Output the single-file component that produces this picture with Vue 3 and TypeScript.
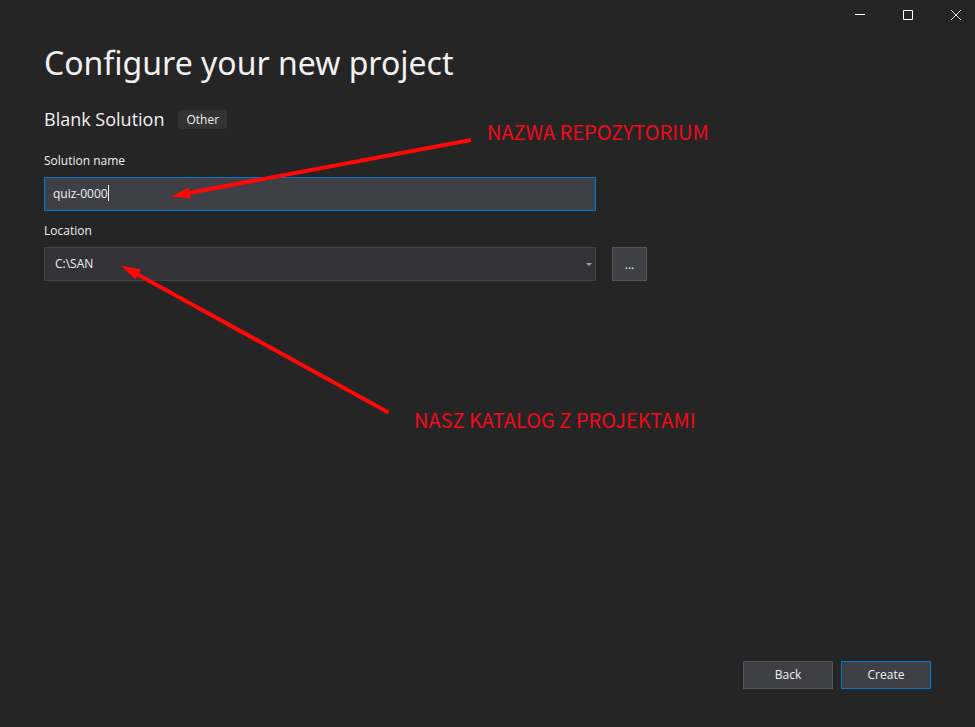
<script setup lang="ts">
import { ref } from 'vue'

const solutionName = ref<string>('quiz-0000')
const location = ref<string>('C:\\SAN')
const locations: string[] = ['C:\\SAN']
</script>

<template>
  <div class="window">
    <header class="titlebar">
      <button type="button" class="win-btn" aria-label="Minimize">
        <svg width="12" height="12" viewBox="0 0 12 12"><path d="M1 5.500H11" stroke="#fff" /></svg>
      </button>
      <button type="button" class="win-btn" aria-label="Maximize">
        <svg width="12" height="12" viewBox="0 0 12 12"><path d="M1.500 1.500H10.500V10.500H1.500Z" fill="none" stroke="#fff" /></svg>
      </button>
      <button type="button" class="win-btn" aria-label="Close">
        <svg width="12" height="12" viewBox="0 0 12 12"><path d="M1 1L11 11M11 1L1 11" stroke="#e0e0e0" /></svg>
      </button>
    </header>

    <main class="content">
      <h1>Configure your new project</h1>
      <div class="template">
        <h2>Blank Solution</h2>
        <span class="tag">Other</span>
      </div>

      <label for="solution-name">Solution name</label>
      <div class="row">
        <div class="field">
          <input id="solution-name" v-model="solutionName" type="text" spellcheck="false" />
          <span class="caret-line" aria-hidden="true"><span class="measure">{{ solutionName }}</span></span>
        </div>
      </div>

      <label for="location">Location</label>
      <div class="row">
        <div class="field">
          <select id="location" v-model="location">
            <option v-for="item in locations" :key="item" :value="item">{{ item }}</option>
          </select>
          <svg class="chevron" width="6" height="3" viewBox="0 0 6 3"><path d="M0 0H6L3 3Z" fill="#a0a0a0" /></svg>
        </div>
        <button type="button" class="browse" aria-label="Browse">...</button>
      </div>
    </main>

    <footer class="actions">
      <button type="button" class="action">Back</button>
      <button type="button" class="action primary">Create</button>
    </footer>

    <svg class="arrows" width="480" height="420" viewBox="0 0 480 420" aria-hidden="true">
      <g stroke="#fe0808" stroke-width="4" fill="none">
        <path d="M471 140L186 193.500" />
        <path d="M388.500 412.500L134 272.500" />
      </g>
      <g fill="#fe0808">
        <path d="M171 196.500L189 187.500L189 193L191 198.500Z" />
        <path d="M121 265.500L141 269.500L138 274L135.500 279.500Z" />
      </g>
    </svg>
    <p class="note note-name">NAZWA REPOZYTORIUM</p>
    <p class="note note-location">NASZ KATALOG Z PROJEKTAMI</p>
  </div>
</template>

<style>
body {
  margin: 0;
  background: #252526;
}
</style>

<style scoped>
.window {
  position: relative;
  display: flex;
  flex-direction: column;
  box-sizing: border-box;
  min-height: 100vh;
  overflow: hidden;
  background: #252526;
  color: #f1f1f1;
  font-family: "Open Sans", "Noto Sans", sans-serif;
  font-size: 12px;
}

button,
input,
select {
  box-sizing: border-box;
  margin: 0;
  border-radius: 0;
  color: inherit;
  font: inherit;
}

.titlebar {
  display: flex;
  justify-content: flex-end;
  height: 30px;
  margin-right: -5px;
}

.win-btn {
  display: grid;
  place-items: center;
  width: 48px;
  padding: 0;
  border: 0;
  background: none;
}

.content {
  display: flex;
  flex: 1;
  flex-direction: column;
  padding: 10px 44px 0;
}

h1,
h2,
.note {
  margin: 0;
  font-weight: 400;
}

h1 {
  font-family: "Noto Sans", sans-serif;
  font-size: 32px;
  line-height: 46px;
}

.template {
  display: flex;
  align-items: center;
  gap: 14px;
  height: 26px;
  margin: 20px 0 19px;
}

h2 {
  font-size: 18px;
  line-height: 28px;
}

.tag {
  padding: 0 8px;
  border-radius: 4px;
  background: #333334;
  line-height: 19px;
}

label {
  margin-bottom: 6px;
  line-height: 20px;
}

.row {
  display: flex;
  gap: 16px;
  margin-bottom: 10px;
}

.field {
  position: relative;
  flex: 0 1 552px;
  height: 34px;
}

.field input,
.field select {
  width: 100%;
  height: 100%;
  outline: 0;
}

.field input {
  padding: 0 8px 2px;
  border: 1px solid #0078d0;
  background: #3f3f46;
}

.caret-line {
  position: absolute;
  top: 8px;
  left: 9px;
  border-right: 1px solid #f1f1f1;
  line-height: 16px;
  pointer-events: none;
}

.measure {
  visibility: hidden;
}

.field select {
  padding: 0 10px 2px;
  border: 1px solid #434346;
  background: #333337;
  appearance: none;
}

.chevron {
  position: absolute;
  top: 16px;
  right: 4px;
  pointer-events: none;
}

.browse {
  width: 35px;
  height: 34px;
  padding: 0;
  border: 1px solid #555555;
  background: #3f3f46;
}

.actions {
  display: flex;
  justify-content: flex-end;
  gap: 8px;
  padding: 0 44px 38px;
}

.action {
  width: 90px;
  height: 28px;
  padding: 0 0 2px;
  border: 1px solid #555555;
  background: #3f3f46;
}

.action.primary {
  border-color: #0078d0;
}

.arrows {
  position: absolute;
  top: 0;
  left: 0;
  pointer-events: none;
}

.note {
  position: absolute;
  color: #f00a1a;
  font-family: "Noto Sans CJK JP", sans-serif;
  font-size: 20px;
  line-height: 30px;
  white-space: nowrap;
}

.note-name {
  top: 117px;
  left: 487px;
}

.note-location {
  top: 405px;
  left: 414px;
}
</style>
